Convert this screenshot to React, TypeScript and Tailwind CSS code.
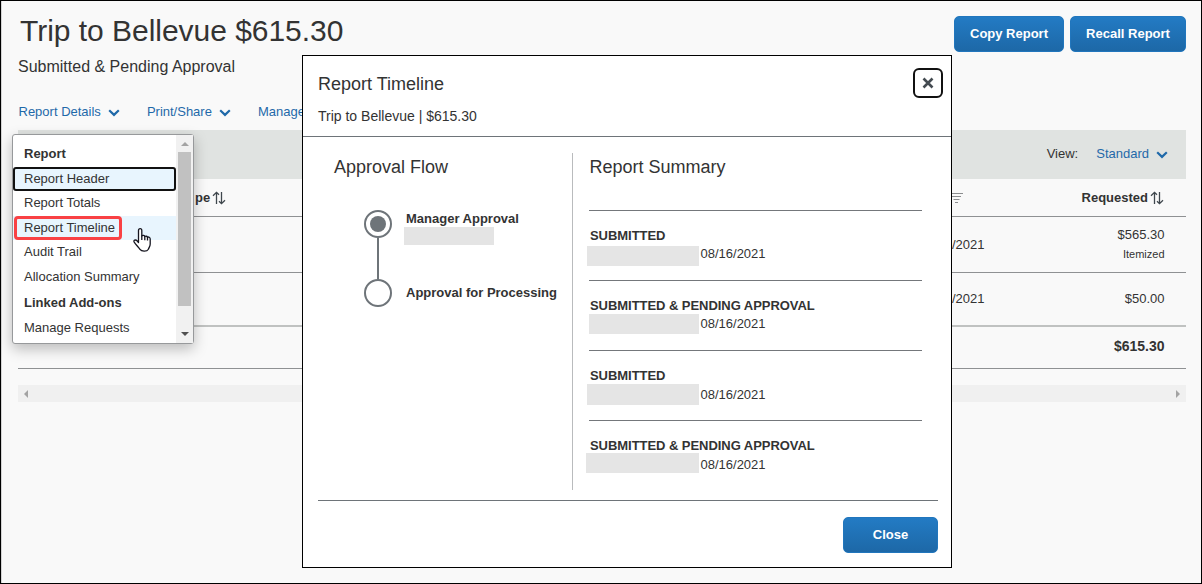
import React from "react";

const buttonClass =
  "flex h-9 items-center justify-center rounded-[5px] border border-[#2176bd] bg-linear-to-b from-[#237bc4] to-[#1d68a7] text-[13px] leading-4 font-bold text-white";

function Chevron() {
  return (
    <svg width="12" height="8" viewBox="0 0 12 8" className="mt-px shrink-0">
      <path d="M1.2 1.3 L6 5.9 L10.8 1.3" fill="none" stroke="#1f69a9" strokeWidth="2.2" />
    </svg>
  );
}

function SortIcon() {
  return (
    <svg width="14" height="14" viewBox="0 0 14 14" className="shrink-0">
      <path d="M4.5 13V1.3 M1 4.8L4.5 1.3L7 3.8 M9.5 1V12.7 M7 10.2L9.5 12.7L13 9.2" fill="none" stroke="#3f474d" strokeWidth="1.3" />
    </svg>
  );
}

function MenuLink({ label }: { label: string }) {
  return (
    <div className="flex items-center gap-[7px]">
      <span>{label}</span>
      <Chevron />
    </div>
  );
}

function Header() {
  return (
    <header className="flex h-[129px] justify-between">
      <div className="flex flex-col pl-[17px]">
        <h1 className="mt-[13px] pl-[2px] text-[30px] leading-[34px] tracking-[-0.03px]">Trip to Bellevue $615.30</h1>
        <p className="mt-[10px] text-[16px] leading-[18px]">Submitted &amp; Pending Approval</p>
        <nav className="mt-[28px] flex gap-[27px] pl-[0.5px] text-[#1f69a9]">
          <MenuLink label="Report Details" />
          <MenuLink label="Print/Share" />
          <span>Manage</span>
        </nav>
      </div>
      <div className="mt-[15px] flex gap-[6px] pr-[15px]">
        <button className={`${buttonClass} w-[110px]`}>Copy Report</button>
        <button className={`${buttonClass} w-[116px]`}>Recall Report</button>
      </div>
    </header>
  );
}

function Expenses() {
  return (
    <section className="mr-[15px] ml-[17px]">
      <div className="flex h-[49px] items-center justify-end bg-[#e0e3e1] pr-[18px] pb-px">
        <span className="mr-[18px]">View:</span>
        <div className="text-[#1f69a9]">
          <MenuLink label="Standard" />
        </div>
      </div>
      <div className="flex h-[38px] items-center border-b border-[#8f9193] pr-[22px] pl-[177px] font-bold">
        <span className="mr-[2px]">pe</span>
        <SortIcon />
        <svg width="13" height="10" viewBox="0 0 13 10" className="ml-[724px] shrink-0">
          <path d="M0 .5H13 M2 3.5H11 M3.5 6.5H9.5 M5 9.5H8" stroke="#8b8d8f" />
        </svg>
        <span className="mr-[2px] ml-auto">Requested</span>
        <SortIcon />
      </div>
      <div className="flex h-[56px] items-center justify-between border-b border-[#8f9193] pr-[21.5px] pl-[934px]">
        <span>/2021</span>
        <div className="flex flex-col items-end gap-[4px] pb-px">
          <span>$565.30</span>
          <span className="text-[11px] leading-[14px]">Itemized</span>
        </div>
      </div>
      <div className="flex h-[54px] items-center justify-between border-b-2 border-[#c0c2c1] pr-[21.5px] pl-[934px]">
        <span>/2021</span>
        <span>$50.00</span>
      </div>
      <div className="flex h-[42px] items-center justify-end border-b border-[#8f9193] pr-[21.5px] pb-[3px] text-[14px] font-bold">
        $615.30
      </div>
      <div className="mt-4 flex h-[17px] items-center justify-between bg-[#f0f0f0] px-[6px]">
        <svg width="4" height="8" viewBox="0 0 4 8">
          <path d="M4 0V8L0 4Z" fill="#a3a3a3" />
        </svg>
        <svg width="4" height="8" viewBox="0 0 4 8">
          <path d="M0 0V8L4 4Z" fill="#a3a3a3" />
        </svg>
      </div>
    </section>
  );
}

function ReportMenu() {
  return (
    <div className="absolute top-[134px] left-[12px] flex h-[210px] w-[182px] overflow-visible rounded-[3px] border border-[#97999b] bg-white shadow-[0_5px_14px_rgba(0,0,0,0.25)]">
      <div className="flex w-[163px] flex-col pt-[7px]">
        <div className="flex h-[25px] items-center pb-[2px] pl-[11px] font-bold">Report</div>
        <div className="flex h-[24px] items-center rounded-[3px] border-2 border-[#111] bg-[#e8f5fe] pl-[9px]">Report Header</div>
        <div className="flex h-[25px] items-center pb-[2px] pl-[11px]">Report Totals</div>
        <div className="flex h-[24px] items-center bg-[#e8f5fe] pl-px">
          <span className="flex h-[24px] w-[108px] items-center rounded-[4px] border-3 border-[#f94144] pl-[7px] whitespace-nowrap">Report Timeline</span>
        </div>
        <div className="flex h-[24px] items-center pl-[11px]">Audit Trail</div>
        <div className="flex h-[26px] items-center pl-[11px]">Allocation Summary</div>
        <div className="flex h-[25px] items-center pl-[11px] font-bold">Linked Add-ons</div>
        <div className="flex h-[25px] items-center pl-[11px]">Manage Requests</div>
      </div>
      <div className="flex flex-1 flex-col items-center bg-[#f1f1f1]">
        <svg width="8" height="4" viewBox="0 0 8 4" className="mt-[7px]">
          <path d="M0 4H8L4 0Z" fill="#a3a3a3" />
        </svg>
        <div className="mt-[6px] h-[154px] w-[13px] bg-[#c1c1c1]" />
        <svg width="8" height="4" viewBox="0 0 8 4" className="mt-[26px]">
          <path d="M0 0H8L4 4Z" fill="#505050" />
        </svg>
      </div>
      <svg width="20" height="26" viewBox="0 0 20 26" className="absolute top-[92px] left-[119px]">
        <path
          d="M6.5 15.5V3.6C6.5 1 9.8 1 9.8 3.6V9C10.6 7.8 12.6 8.2 12.8 9.6C13.6 8.8 15.3 9.2 15.5 10.4C16.5 9.6 18.2 10.2 18.2 12V17C18.2 19.5 17 20.2 16.4 22.2C15 24.7 9.6 24.7 8 22.4C6.6 20.4 3.8 17.6 2.2 15.2C1 13.2 3.6 12.2 5 13.8L6.5 15.5Z"
          fill="white"
          stroke="#15151f"
          strokeWidth="1.3"
          strokeLinejoin="round"
        />
        <path d="M9.8 8.5V13 M12.8 9.5V13.3 M15.5 10.4V13.5" stroke="#15151f" strokeWidth="1.3" />
      </svg>
    </div>
  );
}

function ApprovalFlow() {
  return (
    <section className="w-[269px] pl-[31px]">
      <h2 className="pt-[20px] text-[18px] leading-[20px]">Approval Flow</h2>
      <div className="mt-[33px] flex pl-[30px]">
        <div className="flex w-7 shrink-0 flex-col items-center">
          <div className="flex h-7 w-7 items-center justify-center rounded-full border-2 border-[#6e7479]">
            <div className="h-4 w-4 rounded-full bg-[#6e7479]" />
          </div>
          <div className="h-[41px] w-[2px] bg-[#6e7479]" />
          <div className="h-7 w-7 rounded-full border-2 border-[#6e7479]" />
        </div>
        <div className="ml-3 pt-px font-bold whitespace-nowrap">
          <div className="pl-[2px]">Manager Approval</div>
          <div className="h-[18px] w-[90px] bg-[#e4e4e4]" />
          <div className="mt-[40px] pl-[2px]">Approval for Processing</div>
        </div>
      </div>
    </section>
  );
}

function SummaryEntry({ title, bar, date }: { title: string; bar: string; date: string }) {
  return (
    <div className="h-[70px] border-t border-[#74777b] pt-[17px]">
      <div className="pl-px text-[13px] leading-4 font-bold tracking-[-0.05px] whitespace-nowrap">{title}</div>
      <div className="flex h-[24px] items-start">
        <div className={`shrink-0 bg-[#e5e5e5] ${bar}`} />
        <span className={date}>08/16/2021</span>
      </div>
    </div>
  );
}

function ReportSummary() {
  return (
    <section className="mt-[16px] h-[337px] w-[350px] border-l border-[#b9bbbd] pl-[16px]">
      <h2 className="pt-[4px] pl-[0.5px] text-[18px] leading-[20px]">Report Summary</h2>
      <div className="mt-[33px]">
        <SummaryEntry title="SUBMITTED" bar="mt-[2px] -ml-[2px] h-5 w-[112px]" date="mt-[2px] ml-[1.5px]" />
        <SummaryEntry title="SUBMITTED & PENDING APPROVAL" bar="h-5 w-[110px]" date="mt-[2px] ml-[1.5px]" />
        <SummaryEntry title="SUBMITTED" bar="-ml-[2px] h-[21px] w-[112px]" date="mt-[3px] ml-[1.5px]" />
        <SummaryEntry title="SUBMITTED & PENDING APPROVAL" bar="-mt-px -ml-[3px] h-5 w-[113px]" date="mt-[3px] ml-[1.5px]" />
      </div>
    </section>
  );
}

function TimelineDialog() {
  return (
    <div className="absolute top-[55px] left-[302px] flex h-[513px] w-[650px] flex-col border border-black bg-white">
      <div className="flex h-[81px] justify-between border-b border-[#6e7479] pr-2 pl-[15px]">
        <div>
          <h2 className="mt-[18px] text-[18px] leading-[20px]">Report Timeline</h2>
          <p className="mt-[14px] text-[14px] leading-4">Trip to Bellevue | $615.30</p>
        </div>
        <button className="mt-3 flex h-[30px] w-[30px] items-center justify-center rounded-[6px] border-2 border-[#111]">
          <svg width="12" height="12" viewBox="0 0 12 12">
            <path d="M1.5 1.5L10.5 10.5M10.5 1.5L1.5 10.5" stroke="#444b51" strokeWidth="2.6" />
          </svg>
        </button>
      </div>
      <div className="flex h-[363px]">
        <ApprovalFlow />
        <ReportSummary />
      </div>
      <div className="mr-[13px] ml-[15px] flex justify-end border-t border-[#6e7479] pt-4">
        <button className={`${buttonClass} w-[95px]`}>Close</button>
      </div>
    </div>
  );
}

export default function App() {
  return (
    <main className="relative h-[584px] w-[1202px] overflow-hidden border border-black bg-[#f9f9f9] font-['Liberation_Sans',Arial,sans-serif] text-[13px] leading-4 text-[#333]">
      <div className="h-full border-l border-[#d4d4d4]">
        <div className="-ml-px">
          <Header />
          <Expenses />
        </div>
      </div>
      <div className="absolute -top-px -left-px h-[584px] w-[1202px]">
        <ReportMenu />
        <TimelineDialog />
      </div>
    </main>
  );
}
